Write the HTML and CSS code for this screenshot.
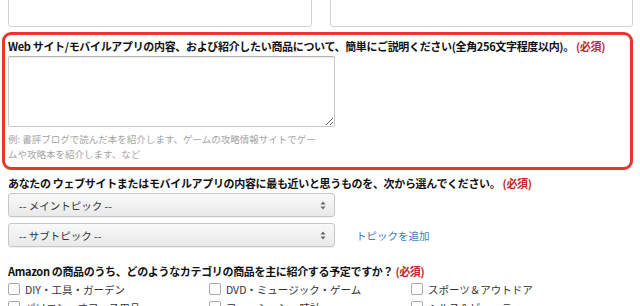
FILE: index.html
```html
<!DOCTYPE html>
<html lang="ja">
<head>
<meta charset="utf-8">
<link rel="stylesheet" href="styles.css">
</head>
<body>
<div class="page">
  <div class="top-row">
    <div class="top-box"></div>
    <div class="top-box"></div>
  </div>

  <div class="error-box">
    <div class="label">Web サイト/モバイルアプリの内容、および紹介したい商品について、簡単にご説明ください(全角256文字程度以内)。 <span class="req">(必須)</span></div>
    <textarea class="desc"></textarea>
    <div class="hint">例: 書評ブログで読んだ本を紹介します、ゲームの攻略情報サイトでゲームや攻略本を紹介します、など</div>
  </div>

  <div class="label label-topic">あなたの ウェブサイトまたはモバイルアプリの内容に最も近いと思うものを、次から選んでください。 <span class="req">(必須)</span></div>
  <div class="select-row">
    <div class="select"><span>-- メイントピック --</span><svg width="6" height="9" viewBox="0 0 6 9"><path d="M3 0.5L5.5 3.5H0.5Z M3 8.5L5.5 5.5H0.5Z" fill="#666"/></svg></div>
  </div>
  <div class="select-row second">
    <div class="select"><span>-- サブトピック --</span><svg width="6" height="9" viewBox="0 0 6 9"><path d="M3 0.5L5.5 3.5H0.5Z M3 8.5L5.5 5.5H0.5Z" fill="#666"/></svg></div>
    <a class="add-link" href="#">トピックを追加</a>
  </div>

  <div class="label label-cat">Amazon の商品のうち、どのようなカテゴリの商品を主に紹介する予定ですか？ <span class="req">(必須)</span></div>
  <div class="cat-grid">
    <label class="cat"><span class="box"></span>DIY・工具・ガーデン</label>
    <label class="cat"><span class="box"></span>DVD・ミュージック・ゲーム</label>
    <label class="cat"><span class="box"></span>スポーツ＆アウトドア</label>
    <label class="cat"><span class="box"></span>パソコン・オフィス用品</label>
    <label class="cat"><span class="box"></span>ファッション・時計</label>
    <label class="cat"><span class="box"></span>ヘルス＆ビューティー</label>
  </div>
</div>
</body>
</html>
```

FILE: styles.css
```css
* { box-sizing: border-box; }
html, body {
  margin: 0;
  padding: 0;
  background: #fff;
  overflow: hidden;
}
body {
  font-family: "Noto Sans CJK JP", "Noto Sans", sans-serif;
  color: #111;
  font-size: 11px;
}
.page {
  width: 640px;
  padding: 0 7px 0 8px;
}
.top-row {
  display: grid;
  grid-template-columns: 1fr 1fr;
  column-gap: 18px;
  margin-top: -13px;
}
.top-box {
  height: 40px;
  border: 1px solid #d2d2d2;
  border-radius: 3px;
  background: #fff;
}
.error-box {
  margin: 5px 0 0 -6px;
  border: 3px solid #e8362c;
  border-radius: 9px;
  padding: 3px 6px 5px 3px;
}
.label {
  font-weight: 700;
  font-size: 11px;
  line-height: 16px;
  letter-spacing: -0.33px;
  white-space: nowrap;
  color: #111;
}
.req {
  color: #c0282d;
}
.desc {
  display: block;
  margin-top: 2px;
  width: 327px;
  height: 71px;
  border: 1px solid #c8c8c8;
  border-top-color: #b5b5b5;
  border-radius: 2px;
  box-shadow: inset 0 1px 1px rgba(0,0,0,0.08);
  background: #fff;
  resize: both;
}
.hint {
  margin-top: 5px;
  width: 310px;
  font-size: 9.5px;
  line-height: 15px;
  color: #a3a3a3;
}
.label-topic {
  margin-top: 5px;
}
.select-row {
  display: flex;
  align-items: center;
  margin-top: 2px;
}
.select-row.second {
  margin-top: 6px;
}
.select {
  width: 327px;
  height: 24px;
  display: flex;
  align-items: center;
  justify-content: space-between;
  padding: 0 8px 0 10px;
  border: 1px solid #c6c6c6;
  border-radius: 3px;
  background: linear-gradient(#f9f9f9, #e9e9e9);
  box-shadow: 0 1px 0 rgba(0,0,0,0.05);
  color: #333;
  font-size: 10.5px;
}
.add-link {
  margin-left: 21px;
  color: #3d7cb8;
  text-decoration: none;
  font-size: 10.5px;
}
.label-cat {
  margin-top: 16px;
}
.cat-grid {
  display: grid;
  grid-template-columns: 201px 202px 1fr;
  grid-auto-rows: 18px;
  margin-top: 1px;
}
.cat {
  display: flex;
  align-items: center;
  font-size: 10.5px;
  color: #333;
  white-space: nowrap;
}
.box {
  width: 12px;
  height: 12px;
  border: 1px solid #a9a9a9;
  border-radius: 2px;
  background: #fff;
  margin-right: 5px;
  flex: none;
}
```
